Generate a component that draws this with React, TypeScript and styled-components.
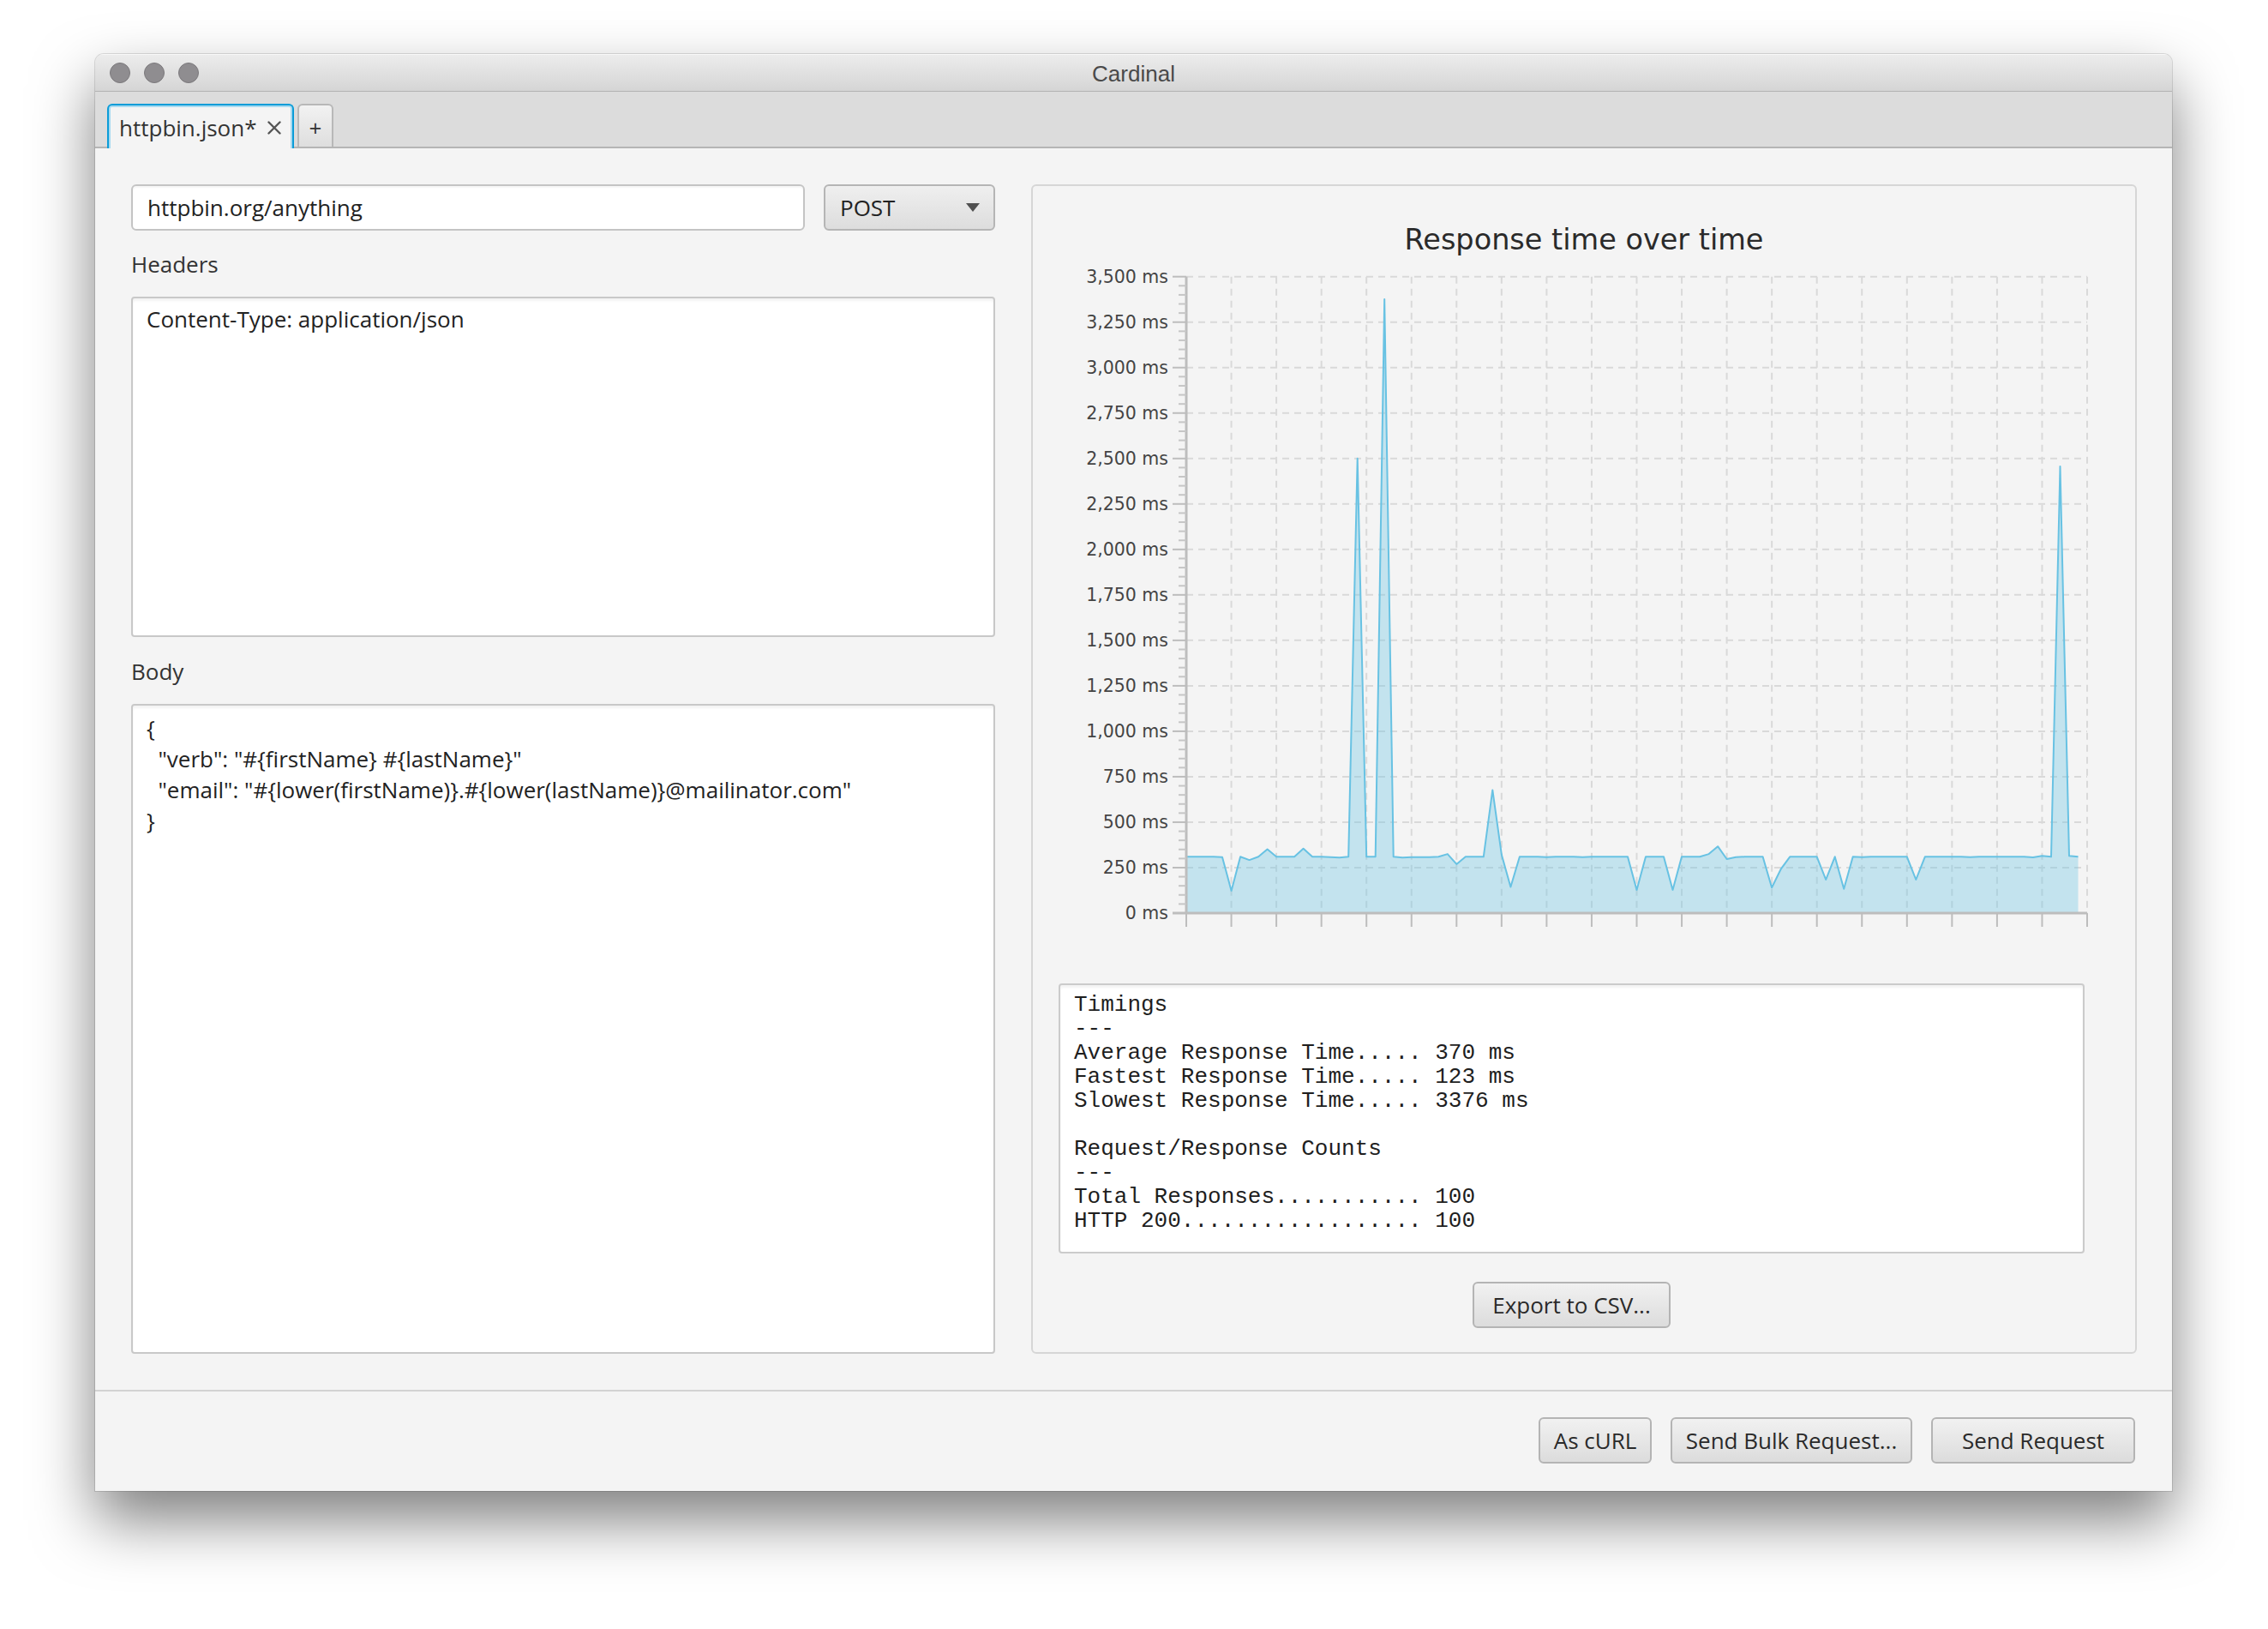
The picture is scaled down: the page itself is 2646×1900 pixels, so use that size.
import React from 'react';
import styled, { createGlobalStyle } from 'styled-components';

const GlobalStyle = createGlobalStyle`
  html, body { margin: 0; padding: 0; background: #ffffff; }
  body { font-family: "Open Sans", "Liberation Sans", sans-serif; color: #333333; }
  * { box-sizing: border-box; }
`;

const Page = styled.div`
  width: 2646px;
  height: 1900px;
  padding: 63px 0 0 111px;
  overflow: hidden;
`;

const Window = styled.div`
  width: 2423px;
  height: 1676px;
  display: flex;
  flex-direction: column;
  background: #f4f4f4;
  border-radius: 10px 10px 0 0;
  overflow: hidden;
  box-shadow: 0 34px 70px rgba(0, 0, 0, 0.5), 0 0 0 1px rgba(0, 0, 0, 0.12);
`;

const TitleBar = styled.div`
  height: 44px;
  flex: none;
  display: grid;
  grid-template-columns: 1fr auto 1fr;
  align-items: center;
  padding-top: 2px;
  background: linear-gradient(#ececec, #d5d5d5);
  border-bottom: 1px solid #b3b3b3;
  border-top: 1px solid #f8f8f8;
`;

const Lights = styled.div`
  display: flex;
  gap: 16px;
  padding-left: 17px;
  margin-top: -2px;
`;

const Light = styled.span`
  width: 24px;
  height: 24px;
  border-radius: 50%;
  background: #8f8d90;
  border: 1px solid #7b797c;
`;

const WindowTitle = styled.div`
  font-family: "Liberation Sans", Arial, sans-serif;
  font-size: 26px;
  color: #4a4a4a;
`;

const TabBar = styled.div`
  height: 66px;
  flex: none;
  display: flex;
  align-items: flex-end;
  gap: 4px;
  padding-left: 14px;
  background: #dcdcdc;
  border-bottom: 2px solid #b5b5b5;
`;

const Tab = styled.div<{ $active?: boolean }>`
  height: 52px;
  margin-bottom: -2px;
  display: flex;
  align-items: center;
  gap: 12px;
  font-size: 26px;
  color: #333;
  border-radius: 6px 6px 0 0;
  ${(p) =>
    p.$active
      ? `
    width: 218px;
    padding: 2px 0 0 12px;
    background: #f4f4f4;
    border: 2px solid #0a9cd8;
    border-bottom: none;
    box-shadow: inset 0 2px 0 #a8daf0, inset 2px 0 0 #a8daf0, inset -2px 0 0 #a8daf0;
  `
      : `
    width: 42px;
    height: 50px;
    margin-bottom: 0;
    justify-content: center;
    padding-top: 4px;
    background: linear-gradient(#f2f2f2, #dedede);
    border: 2px solid #b8b8b8;
    border-bottom: none;
  `}
`;

const Content = styled.div`
  flex: 1;
  display: flex;
  gap: 42px;
  padding: 42px 41px 42px 42px;
  min-height: 0;
`;

const LeftColumn = styled.div`
  width: 1008px;
  flex: none;
  display: flex;
  flex-direction: column;
`;

const UrlRow = styled.div`
  height: 54px;
  display: flex;
  gap: 22px;
`;

const TextField = styled.div`
  width: 786px;
  height: 54px;
  display: flex;
  align-items: center;
  padding-left: 17px;
  font-size: 26px;
  color: #222;
  background: #ffffff;
  border: 2px solid #c4c4c4;
  border-radius: 6px;
  box-shadow: inset 0 2px 2px rgba(0, 0, 0, 0.04);
`;

const Combo = styled.div`
  width: 200px;
  height: 54px;
  display: flex;
  align-items: center;
  justify-content: space-between;
  padding: 0 16px 0 17px;
  font-size: 26px;
  color: #222;
  background: linear-gradient(#efefef, #dddddd);
  border: 2px solid #b5b5b5;
  border-radius: 6px;
`;

const FieldLabel = styled.div`
  height: 36px;
  line-height: 36px;
  font-size: 26px;
  color: #333;
  margin: ${(p: { $top: number }) => p.$top}px 0 20px;
`;

const TextArea = styled.div<{ $h?: number; $pt: number }>`
  ${(p) => (p.$h ? `height: ${p.$h}px; flex: none;` : 'flex: 1;')}
  padding: ${(p) => p.$pt}px 16px 8px;
  font-size: 26px;
  line-height: 36px;
  color: #222;
  white-space: pre;
  background: #ffffff;
  border: 2px solid #c8c8c8;
  border-radius: 4px;
  box-shadow: inset 0 3px 3px rgba(0, 0, 0, 0.05);
`;

const ChartPanel = styled.div`
  flex: 1;
  display: flex;
  flex-direction: column;
  padding: 0 30px;
  border: 2px solid #d6d6d6;
  border-radius: 6px;
`;

const ChartTitle = styled.div`
  margin-top: 41px;
  height: 44px;
  line-height: 44px;
  text-align: center;
  font-family: "DejaVu Sans", sans-serif;
  font-size: 33.5px;
  color: #2a2a2a;
`;

const ChartSvg = styled.svg`
  display: block;
  flex: none;
  margin-top: -2px;
`;

const StatsBlock = styled.div`
  width: 1197px;
  margin-top: 47px;
  display: flex;
  flex-direction: column;
  align-items: center;
  gap: 33px;
`;

const StatsText = styled.pre`
  margin: 0;
  width: 100%;
  height: 315px;
  padding: 9px 16px;
  font-family: "Liberation Mono", "Courier New", monospace;
  font-size: 26px;
  line-height: 28px;
  color: #1e1e1e;
  background: #ffffff;
  border: 2px solid #cbcbcb;
  border-radius: 4px;
  box-shadow: inset 0 3px 3px rgba(0, 0, 0, 0.05);
`;

const Button = styled.div<{ $w: number }>`
  width: ${(p) => p.$w}px;
  height: 54px;
  flex: none;
  display: flex;
  align-items: center;
  justify-content: center;
  font-size: 26px;
  color: #2a2a2a;
  background: linear-gradient(#f1f1f1, #dcdcdc);
  border: 2px solid #b4b4b4;
  border-radius: 6px;
`;

const Footer = styled.div`
  height: 118px;
  flex: none;
  display: flex;
  justify-content: flex-end;
  align-items: flex-start;
  gap: 22px;
  padding: 30px 43px 0 0;
  border-top: 2px solid #d2d2d2;
`;

const data: number[] = [
  310, 310, 310, 310, 308, 123, 310, 292, 310, 351,
  310, 310, 310, 355, 310, 310, 308, 305, 310, 2500,
  310, 310, 3376, 310, 305, 308, 308, 308, 310, 325,
  269, 310, 310, 310, 677, 320, 144, 310, 310, 310,
  308, 310, 310, 310, 308, 310, 310, 310, 310, 310,
  128, 310, 310, 310, 128, 310, 310, 310, 325, 367,
  297, 308, 310, 310, 310, 140, 242, 310, 310, 310,
  310, 184, 310, 133, 310, 308, 310, 310, 310, 310,
  310, 184, 310, 310, 310, 310, 310, 308, 310, 310,
  310, 310, 310, 310, 306, 315, 310, 2457, 315, 310,
];

const CW = 1226;
const CH = 800;
const PL = 149;
const PR = 1200;
const PT = 22.7;
const PB = 765;
const MAXV = 3500;
const xOf = (i: number) => PL + (i * (PR - PL)) / 100;
const yOf = (v: number) => PB - (v / MAXV) * (PB - PT);

function Chart() {
  const majors: number[] = [];
  for (let v = 0; v <= MAXV; v += 250) majors.push(v);
  const minors: number[] = [];
  for (let v = 50; v < MAXV; v += 50) if (v % 250 !== 0) minors.push(v);
  const xs: number[] = [];
  for (let i = 0; i <= 100; i += 5) xs.push(i);
  const pts = data.map((v, i) => `${xOf(i).toFixed(1)},${yOf(v).toFixed(1)}`).join(' ');
  const area = `${xOf(0)},${PB} ${pts} ${xOf(data.length - 1).toFixed(1)},${PB}`;
  return (
    <ChartSvg width={CW} height={CH} viewBox={`0 0 ${CW} ${CH}`}>
      {majors.slice(1).map((v) => (
        <line key={`h${v}`} x1={PL} x2={PR} y1={yOf(v)} y2={yOf(v)} stroke="#d9d9d9" strokeWidth={2} strokeDasharray="8 6" />
      ))}
      {xs.slice(1).map((i) => (
        <line key={`v${i}`} x1={xOf(i)} x2={xOf(i)} y1={PT} y2={PB} stroke="#d9d9d9" strokeWidth={2} strokeDasharray="8 6" />
      ))}
      <polygon points={area} fill="rgb(107,196,228)" fillOpacity={0.36} />
      <polyline points={pts} fill="none" stroke="#68c2e3" strokeWidth={2} strokeLinejoin="round" />
      <line x1={PL} x2={PL} y1={PT} y2={PB} stroke="#bdbdbd" strokeWidth={3} />
      <line x1={PL - 16} x2={PR} y1={PB} y2={PB} stroke="#bdbdbd" strokeWidth={3} />
      {majors.map((v) => (
        <line key={`mt${v}`} x1={PL - 16} x2={PL} y1={yOf(v)} y2={yOf(v)} stroke="#bdbdbd" strokeWidth={2} />
      ))}
      {minors.map((v) => (
        <line key={`mn${v}`} x1={PL - 9} x2={PL} y1={yOf(v)} y2={yOf(v)} stroke="#c6c6c6" strokeWidth={2} />
      ))}
      {xs.map((i) => (
        <line key={`xt${i}`} x1={xOf(i)} x2={xOf(i)} y1={PB} y2={PB + 16} stroke="#bdbdbd" strokeWidth={2} />
      ))}
      {majors.map((v) => (
        <text
          key={`l${v}`}
          x={128}
          y={yOf(v)}
          textAnchor="end"
          dominantBaseline="central"
          fontFamily='"DejaVu Sans", sans-serif'
          fontSize={20.5}
          fill="#444444"
        >
          {`${v.toLocaleString('en-US')} ms`}
        </text>
      ))}
    </ChartSvg>
  );
}

const stats = `Timings
---
Average Response Time..... 370 ms
Fastest Response Time..... 123 ms
Slowest Response Time..... 3376 ms

Request/Response Counts
---
Total Responses........... 100
HTTP 200.................. 100`;

const body = `{
  "verb": "#{firstName} #{lastName}"
  "email": "#{lower(firstName)}.#{lower(lastName)}@mailinator.com"
}`;

export default function App() {
  return (
    <>
      <GlobalStyle />
      <Page>
        <Window>
          <TitleBar>
            <Lights>
              <Light />
              <Light />
              <Light />
            </Lights>
            <WindowTitle>Cardinal</WindowTitle>
            <div />
          </TitleBar>
          <TabBar>
            <Tab $active>
              <span>httpbin.json*</span>
              <svg width="16" height="16" viewBox="0 0 16 16">
                <path d="M1.5 1.5 L14.5 14.5 M14.5 1.5 L1.5 14.5" stroke="#555" strokeWidth="2.4" strokeLinecap="round" />
              </svg>
            </Tab>
            <Tab>+</Tab>
          </TabBar>
          <Content>
            <LeftColumn>
              <UrlRow>
                <TextField>httpbin.org/anything</TextField>
                <Combo>
                  <span>POST</span>
                  <svg width="16" height="10" viewBox="0 0 16 10">
                    <polygon points="0,0 16,0 8,10" fill="#505050" />
                  </svg>
                </Combo>
              </UrlRow>
              <FieldLabel $top={21}>Headers</FieldLabel>
              <TextArea $h={397} $pt={6}>Content-Type: application/json</TextArea>
              <FieldLabel $top={22}>Body</FieldLabel>
              <TextArea $pt={8}>{body}</TextArea>
            </LeftColumn>
            <ChartPanel>
              <ChartTitle>Response time over time</ChartTitle>
              <Chart />
              <StatsBlock>
                <StatsText>{stats}</StatsText>
                <Button $w={231}>Export to CSV...</Button>
              </StatsBlock>
            </ChartPanel>
          </Content>
          <Footer>
            <Button $w={132}>As cURL</Button>
            <Button $w={282}>Send Bulk Request...</Button>
            <Button $w={238}>Send Request</Button>
          </Footer>
        </Window>
      </Page>
    </>
  );
}
